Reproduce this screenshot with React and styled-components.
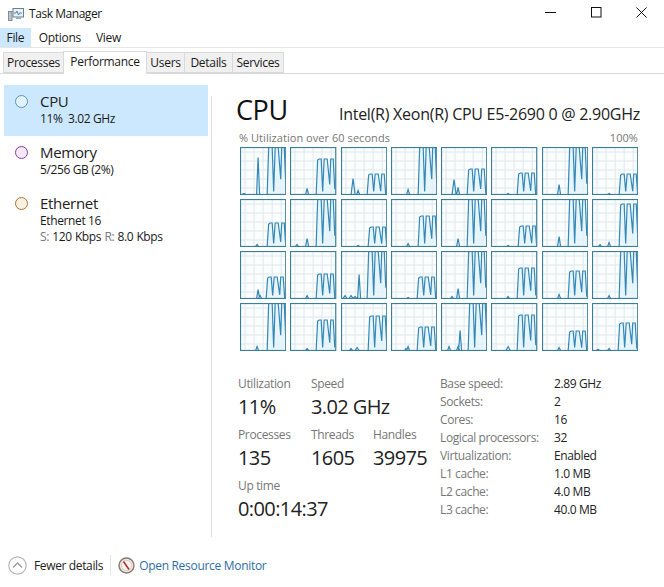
import React from "react";
import styled, { createGlobalStyle } from "styled-components";

const Global = createGlobalStyle`
  html, body { margin: 0; padding: 0; background: #fff; }
  body { font-family: "Open Sans", "Noto Sans", sans-serif; color: #1a1a1a; }
`;
const Window = styled.div`
  width: 664px; height: 587px; display: flex; flex-direction: column; overflow: hidden; background: #fff;
`;
const TitleBar = styled.div`
  height: 28px; display: flex; align-items: center; padding-left: 8px; flex: none;
`;
const TitleText = styled.span`
  font-size: 12px; letter-spacing: -0.45px; margin-left: 5px; margin-top: -1px;
`;
const Controls = styled.div`
  margin-left: auto; display: flex; align-items: center; padding-right: 17px; gap: 34.5px; margin-top: -4px;
`;
const MenuBar = styled.div`
  height: 19px; display: flex; flex: none; border-bottom: 1px solid #e6e6e6;
`;
const MenuItem = styled.div`
  font-size: 12px; letter-spacing: -0.3px; height: 19px; display: flex; align-items: center;
  padding: 0 ${p => p.$pad}px; background: ${p => p.$active ? "#cce8ff" : "transparent"};
`;
const TabBar = styled.div`
  height: 22px; margin-top: 3px; padding-left: 3px; display: flex; align-items: flex-end;
  border-bottom: 1px solid #d9d9d9; flex: none;
`;
const Tab = styled.div`
  font-size: 12px; letter-spacing: -0.3px; box-sizing: border-box;
  height: ${p => p.$active ? 23 : 21}px; width: ${p => p.$w}px;
  padding-bottom: ${p => p.$active ? 3 : 0}px;
  display: flex; align-items: center; justify-content: center;
  background: ${p => p.$active ? "#fff" : "#f0f0f0"};
  border: 1px solid #d9d9d9; border-bottom: ${p => p.$active ? "none" : "1px solid #d9d9d9"};
  margin-left: ${p => p.$first ? 0 : -1}px; margin-bottom: ${p => p.$active ? -1 : 0}px;
  position: relative; z-index: ${p => p.$active ? 1 : 0};
`;
const Body = styled.div`
  flex: 1; display: flex; min-height: 0; height: 477px;
`;
const Side = styled.div`
  width: 208px; padding: 11px 0 0 4px; box-sizing: border-box; flex: none;
`;
const Divider = styled.div`
  width: 1px; margin: 22px 0 6px 3px; background: #dcdcdc; flex: none;
`;
const SideItem = styled.div`
  height: ${p => p.$h}px; display: flex; background: ${p => p.$active ? "#cce8ff" : "transparent"};
  box-sizing: border-box; padding: 7px 0 0 11px;
`;
const Dot = styled.div`
  width: 13px; height: 13px; border-radius: 50%; box-sizing: border-box; margin-top: 3px; flex: none;
  border: 1.5px solid ${p => p.$c}; background: ${p => p.$bg};
`;
const SideText = styled.div`
  margin-left: 12px; display: flex; flex-direction: column;
`;
const SideName = styled.div`
  font-size: 15px; line-height: 18px; letter-spacing: -0.3px; color: #222;
`;
const SideSub = styled.div`
  font-size: 12px; line-height: 16px; letter-spacing: -0.38px; margin-top: ${p => p.$tight ? 0 : 1}px;
  word-spacing: ${p => p.$tight ? 0.5 : 0}px;
`;
const Grey = styled.span`
  color: #777;
`;
const Main = styled.div`
  flex: 1; padding: 18px 26px 0 24px; display: flex; flex-direction: column; min-width: 0;
`;
const Head = styled.div`
  display: flex; justify-content: space-between; align-items: flex-start; height: 31px;
`;
const Big = styled.div`
  font-size: 27px; line-height: 35px; letter-spacing: -0.4px; color: #111;
`;
const Cpu = styled.div`
  font-size: 16px; line-height: 20px; letter-spacing: -0.26px; color: #222; margin: 12px -2px 0 0;
`;
const ChartHead = styled.div`
  display: flex; justify-content: space-between; font-size: 11px; line-height: 15px; letter-spacing: 0.05px;
  color: #777; margin: 7px 0 2px 3px;
`;
const Charts = styled.div`
  display: grid; grid-template-columns: repeat(8, 1fr); grid-auto-rows: 48px; gap: 4px; margin-left: 4px; width: 398px;
`;
const Stats = styled.div`
  display: flex; margin: 25px 0 0 2px;
`;
const LeftStats = styled.div`
  width: 202px; flex: none; display: flex; flex-direction: column; gap: 7px;
`;
const StatRow = styled.div`
  display: flex;
`;
const Stat = styled.div`
  width: ${p => p.$w}px; display: flex; flex-direction: column;
`;
const StatLabel = styled.div`
  font-size: 12px; line-height: 16px; letter-spacing: -0.35px; color: #777;
`;
const StatValue = styled.div`
  font-size: 20px; line-height: 27px; letter-spacing: -0.6px; color: #222; padding-top: 1px;
`;
const Facts = styled.div`
  display: grid; grid-template-columns: 114px auto; grid-auto-rows: 18px; align-items: center;
  font-size: 12px; letter-spacing: -0.38px; justify-content: start; margin-top: -2px; align-self: flex-start;
`;
const FactLabel = styled.div`
  color: #777;
`;
const FactValue = styled.div`
  color: #222;
`;
const Footer = styled.div`
  height: 44px; flex: none; display: flex; align-items: center; padding: 0 0 0 8px;
`;
const FooterText = styled.span`
  font-size: 12px; letter-spacing: -0.36px; margin-left: 7px; color: #222;
`;
const FooterSep = styled.div`
  width: 1px; height: 20px; background: #e4e4e4; margin: 0 7px 0 7px;
`;
const FooterLink = styled.span`
  font-size: 12px; letter-spacing: -0.3px; margin-left: 4px; color: #2f6ea5;
`;

const rows = [
  [[0,28,[[18,37,1.5],[4,1,2]]],[12,27,[[17,6,1.5]]],[27,27,[[12,16,2],[17,4,1.5]]],[0,28,[[17,5,1.5]]],[22,27,[[13,15,2],[17,7,1.5]]],[26,27,[[17,1,1.5]]],[0,27,[[17,10,1.5]]],[27,28,[[17,1,1.5]]]],
  [[24,28,[[17,2,1.5]]],[0,27,[[17,8,1.5],[7,2,1.5]]],[28,28,[[17,1,1.5]]],[17,28,[[17,3,1.5]]],[0,27,[[17,8,1.5]]],[27,28,[[17,1,1.5]]],[0,27,[[17,10,1.5]]],[5,28,[[8,2,1.5],[17,4,1.5]]]],
  [[26,27,[[18,9,1.5],[20,3,1.5]]],[23,27,[[17,3,1.5]]],[0,27,[[18,24,1.5],[4,3,2],[10,3,2],[14,2,2]]],[26,27,[[17,1,1.5]]],[0,27,[[17,10,1.5],[11,2,1.5]]],[17,27,[[17,2,1.5]]],[20,27,[[17,4,1.5]]],[0,28,[[17,3,1.5]]]],
  [[0,28,[[17,4,1.5]]],[17,27,[[17,2,1.5]]],[13,28,[[10,2,1.5],[16,3,2]]],[24,27,[[17,4,1.5],[15,2,1.5]]],[0,28,[[19,20,1.5],[8,4,1.5],[17,4,1.5]]],[12,27,[[17,4,2]]],[28,27,[[17,3,1.5]]],[20,27,[[17,2,1.5],[6,1,2]]]],
];

function linePath(top, start, bumps) {
  const b = 47.5;
  const pts = [[0, b]];
  [...bumps].sort((a, c) => a[0] - c[0]).forEach(([x, h, w]) => {
    pts.push([x - w, b], [x, b - h], [x + w, b]);
  });
  const t = Math.max(top, -2);
  const dip = Math.min(b, t + (b - t) * 0.55);
  pts.push([start - 1, b], [start + 0.5, t + 1], [start + 2, t], [start + 4, t], [start + 5.5, b - 3],
    [start + 7, t], [start + 10, t], [start + 12.5, dip + 6], [start + 13.5, t], [start + 16, t], [start + 17.5, dip + 10], [47, dip + 10]);
  return pts.map(p => p.join(",")).join(" ");
}

const Chart = ({ top, start, bumps, id }) => {
  const pts = linePath(top, start, bumps);
  return (
    <svg width="100%" height="48" viewBox="0 0 46 48" preserveAspectRatio="none" style={{ display: "block" }}>
      <clipPath id={id}><rect x="1" y="1" width="44" height="46" /></clipPath>
      <rect x="0" y="0" width="46" height="48" fill="#fbfeff" />
      {[5, 14, 23, 32, 41].map(x => <line key={x} x1={x} x2={x} y1="1" y2="47" stroke="#e0e8ec" strokeWidth="1" />)}
      {[5, 14, 23, 32, 41].map(y => <line key={y} y1={y} y2={y} x1="1" x2="45" stroke="#e0e8ec" strokeWidth="1" />)}
      <g clipPath={`url(#${id})`}>
        <polygon points={`${pts} 47,48 0,48`} fill="#e2f3fb" fillOpacity="0.75" />
        <polyline points={pts} fill="none" stroke="#3388b8" strokeWidth="1.2" />
      </g>
      <rect x="0.5" y="0.5" width="45" height="47" fill="none" stroke="#3a7f98" strokeWidth="1.2" />
    </svg>
  );
};

const facts = [
  ["Base speed:", "2.89 GHz"], ["Sockets:", "2"], ["Cores:", "16"], ["Logical processors:", "32"],
  ["Virtualization:", "Enabled"], ["L1 cache:", "1.0 MB"], ["L2 cache:", "4.0 MB"], ["L3 cache:", "40.0 MB"],
];

export default function App() {
  return (
    <Window>
      <Global />
      <TitleBar>
        <svg width="16" height="15" viewBox="0 0 16 15">
          <rect x="5" y="1.5" width="10.5" height="8.5" fill="#e8f1f6" stroke="#6d7f8c" />
          <path d="M6 6h2l1-2 1.5 4 1-2H14" fill="none" stroke="#3f7fa8" strokeWidth="0.9" />
          <path d="M8 10.5h5v1.5H8z" fill="#9aa6ae" />
          <rect x="0.5" y="4.5" width="3.5" height="9" fill="#b9c4cb" stroke="#6d7f8c" strokeWidth="0.8" />
        </svg>
        <TitleText>Task Manager</TitleText>
        <Controls>
          <svg width="11" height="11" viewBox="0 0 11 11"><path d="M0 5.5h11" stroke="#111" strokeWidth="1" /></svg>
          <svg width="11" height="11" viewBox="0 0 11 11"><rect x="0.5" y="0.5" width="9.5" height="9.5" fill="none" stroke="#111" strokeWidth="1" /></svg>
          <svg width="11" height="11" viewBox="0 0 11 11"><path d="M0.5 0.5l10 10M10.5 0.5l-10 10" stroke="#111" strokeWidth="1" /></svg>
        </Controls>
      </TitleBar>
      <MenuBar>
        <MenuItem $active $pad={6.5}>File</MenuItem>
        <MenuItem $pad={8}>Options</MenuItem>
        <MenuItem $pad={7}>View</MenuItem>
      </MenuBar>
      <TabBar>
        <Tab $first $w={61}>Processes</Tab>
        <Tab $w={84} $active>Performance</Tab>
        <Tab $w={39}>Users</Tab>
        <Tab $w={49}>Details</Tab>
        <Tab $w={52}>Services</Tab>
      </TabBar>
      <Body>
        <Side>
          <SideItem $active $h={51}>
            <Dot $c="#5a93b5" $bg="#e2f2fb" />
            <SideText><SideName>CPU</SideName><SideSub>11%&nbsp; 3.02 GHz</SideSub></SideText>
          </SideItem>
          <SideItem $h={51}>
            <Dot $c="#8b3f9e" $bg="#f4e8f8" />
            <SideText><SideName>Memory</SideName><SideSub>5/256 GB (2%)</SideSub></SideText>
          </SideItem>
          <SideItem $h={70}>
            <Dot $c="#a9752f" $bg="#fbf0e2" />
            <SideText>
              <SideName>Ethernet</SideName>
              <SideSub>Ethernet 16</SideSub>
              <SideSub $tight><Grey>S:</Grey> 120 Kbps <Grey>R:</Grey> 8.0 Kbps</SideSub>
            </SideText>
          </SideItem>
        </Side>
        <Divider />
        <Main>
          <Head>
            <Big>CPU</Big>
            <Cpu>Intel(R) Xeon(R) CPU E5-2690 0 @ 2.90GHz</Cpu>
          </Head>
          <ChartHead><span>% Utilization over 60 seconds</span><span>100%</span></ChartHead>
          <Charts>
            {rows.flatMap((r, i) => r.map(([top, start, bumps], j) => (
              <Chart key={`${i}-${j}`} id={`c${i}-${j}`} top={top} start={start} bumps={bumps} />
            )))}
          </Charts>
          <Stats>
            <LeftStats>
              <StatRow>
                <Stat $w={73}><StatLabel>Utilization</StatLabel><StatValue>11%</StatValue></Stat>
                <Stat $w={100}><StatLabel>Speed</StatLabel><StatValue>3.02 GHz</StatValue></Stat>
              </StatRow>
              <StatRow>
                <Stat $w={73}><StatLabel>Processes</StatLabel><StatValue>135</StatValue></Stat>
                <Stat $w={62}><StatLabel>Threads</StatLabel><StatValue>1605</StatValue></Stat>
                <Stat $w={60}><StatLabel>Handles</StatLabel><StatValue>39975</StatValue></Stat>
              </StatRow>
              <StatRow>
                <Stat $w={120}><StatLabel>Up time</StatLabel><StatValue>0:00:14:37</StatValue></Stat>
              </StatRow>
            </LeftStats>
            <Facts>
              {facts.map(([k, v]) => (
                <React.Fragment key={k}><FactLabel>{k}</FactLabel><FactValue>{v}</FactValue></React.Fragment>
              ))}
            </Facts>
          </Stats>
        </Main>
      </Body>
      <Footer>
        <svg width="19" height="19" viewBox="0 0 19 19">
          <circle cx="9.5" cy="9.5" r="8.7" fill="#fff" stroke="#b5b5b5" strokeWidth="1.2" />
          <path d="M5 11.5l4.5-4.5 4.5 4.5" fill="none" stroke="#9a9a9a" strokeWidth="1.3" />
        </svg>
        <FooterText>Fewer details</FooterText>
        <FooterSep />
        <svg width="17" height="17" viewBox="0 0 17 17">
          <circle cx="8.5" cy="8.5" r="7.5" fill="#efe7df" stroke="#857a74" strokeWidth="1.4" />
          <circle cx="8.5" cy="8.5" r="5" fill="#fbf8f6" stroke="#c9b6aa" strokeWidth="0.6" />
          <path d="M5.5 4.5l5.5 8" stroke="#b32a2a" strokeWidth="1.5" />
        </svg>
        <FooterLink>Open Resource Monitor</FooterLink>
      </Footer>
    </Window>
  );
}
